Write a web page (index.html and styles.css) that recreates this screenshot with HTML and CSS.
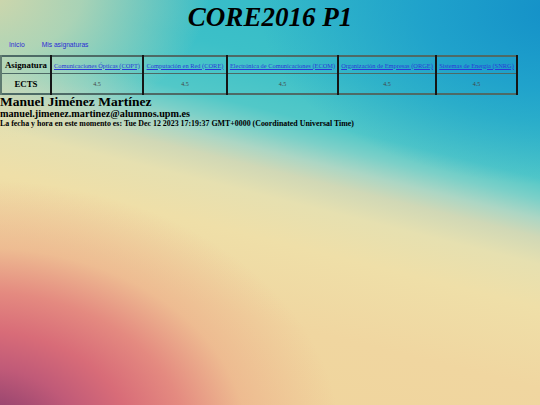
FILE: index.html
```html
<!DOCTYPE html>
<html lang="es">
<head>
<meta charset="utf-8">
<title>CORE2016 P1</title>
<link rel="stylesheet" href="styles.css">
</head>
<body>
<div class="bg"></div>
<header class="top">
  <h1 class="title">CORE2016 P1</h1>
  <nav class="nav">
    <a href="#">Inicio</a>
    <a href="#">Mis asignaturas</a>
  </nav>
</header>
<table class="grid">
  <tr class="r1">
    <th>Asignatura</th>
    <td class="c1"><a href="#">Comunicaciones Ópticas (COPT)</a></td>
    <td class="c2"><a href="#">Computación en Red (CORE)</a></td>
    <td class="c3"><a href="#">Electrónica de Comunicaciones (ECOM)</a></td>
    <td class="c4"><a href="#">Organización de Empresas (ORGE)</a></td>
    <td class="c5"><a href="#">Sistemas de Energía (SNRG)</a></td>
  </tr>
  <tr class="r2">
    <th>ECTS</th>
    <td>4.5</td>
    <td>4.5</td>
    <td>4.5</td>
    <td>4.5</td>
    <td>4.5</td>
  </tr>
</table>
<section class="info">
  <h2 class="name">Manuel Jiménez Martínez</h2>
  <h3 class="mail">manuel.jimenez.martinez@alumnos.upm.es</h3>
  <p class="date">La fecha y hora en este momento es: Tue Dec 12 2023 17:19:37 GMT+0000 (Coordinated Universal Time)</p>
</section>
</body>
</html>
```
FILE: styles.css
```css
html, body {
  margin: 0;
  padding: 0;
  height: 100%;
}
body {
  font-family: "Liberation Serif", "Times New Roman", serif;
  color: #000;
  position: relative;
  overflow: hidden;
  background: #efdca6;
}
.bg {
  position: absolute;
  inset: 0;
  z-index: -1;
  background:
    radial-gradient(ellipse 360px 260px at -20px 440px, #6e3a6c 0%, #9a4670 14%, #c05a78 28%, #d86c78 42%, #e48a80 57%, rgba(236,170,136,0.6) 74%, rgba(240,200,150,0) 100%),
    radial-gradient(ellipse 230px 150px at -20px -10px, rgba(222,216,168,0.95) 0%, rgba(214,218,174,0.7) 45%, rgba(205,220,180,0) 100%),
    radial-gradient(ellipse 300px 175px at 560px 10px, #1490c8 0%, rgba(26,156,204,0.8) 45%, rgba(40,170,204,0) 100%),
    linear-gradient(14deg, #f0d49a 0%, #f0d6a0 28%, #efdfa8 43%, #e6e0b0 51%, #d0d8b6 56%, #acd6c4 59.5%, #7cd0c8 63%, #52c8c8 67%, #3cc0c8 77%, #30b6c8 100%);
}
.top {
  display: flex;
  flex-direction: column;
}
.title {
  margin: 0;
  padding-top: 1px;
  text-align: center;
  font-size: 27px;
  font-weight: bold;
  font-style: italic;
  line-height: 32px;
}
.nav {
  display: flex;
  gap: 17px;
  padding: 6px 0 0 9px;
  height: 11px;
  font-family: "Liberation Sans", Arial, sans-serif;
  font-size: 6.7px;
  line-height: 11px;
}
.nav a {
  color: #2b2bd6;
  text-decoration: none;
}
.grid {
  margin-top: 5px;
  border-collapse: collapse;
  width: 518px;
  table-layout: fixed;
  border-top: 2px solid #4d6a66;
  border-bottom: 2px solid #4d6a66;
  border-left: 2px solid #5f7a70;
}
.grid th, .grid td {
  border-left: 2px solid #151515;
  border-right: 2px solid #151515;
  border-top: 1px solid #4d6a66;
  border-bottom: 1px solid #4d6a66;
  text-align: center;
  padding: 0;
}
.grid th:first-child {
  border-left: 2px solid #5f7a70;
}
.grid .r1 th, .grid .r1 td {
  height: 16px;
}
.grid .r2 th, .grid .r2 td {
  height: 19px;
}
.grid th {
  width: 48px;
  font-size: 8.8px;
  font-weight: bold;
}
.grid td {
  font-size: 6px;
  color: #444;
}
.grid .c1 { width: 90px; }
.grid .c2 { width: 82px; }
.grid .c3 { width: 109px; }
.grid .c4 { width: 96px; }
.grid a {
  color: #2a38d8;
  text-decoration: underline;
  font-size: 6.4px;
}
.info {
  display: flex;
  flex-direction: column;
}
.name {
  margin: 0;
  font-size: 13.5px;
  line-height: 13px;
  font-weight: bold;
}
.mail {
  margin: 0;
  font-size: 10.2px;
  line-height: 11px;
  font-weight: bold;
}
.date {
  margin: 0;
  font-size: 7.9px;
  line-height: 9px;
  font-weight: bold;
}
```
